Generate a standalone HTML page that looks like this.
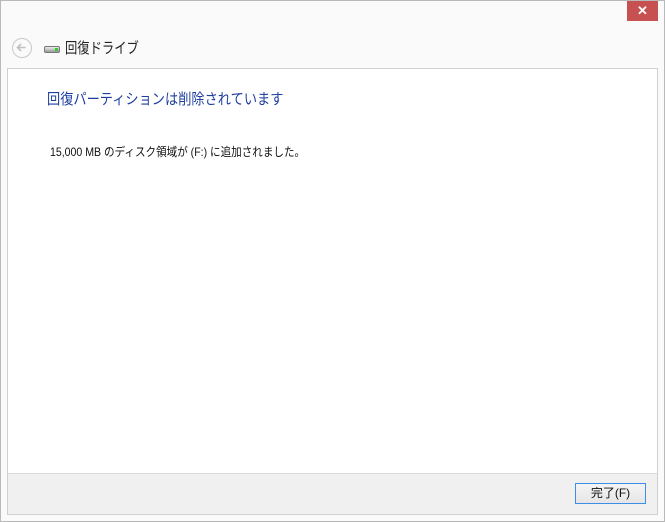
<!DOCTYPE html>
<html><head><meta charset="utf-8"><style>
*{margin:0;padding:0;box-sizing:border-box}
body{width:665px;height:522px;overflow:hidden;background:#fafafa;font-family:"Liberation Sans","Noto Sans CJK JP",sans-serif;position:relative}
.win{position:absolute;left:0;top:0;width:665px;height:522px;border:1px solid #b9b9b9}
.close{position:absolute;left:627px;top:1px;width:31px;height:20px;background:#c75050;color:#fff;font-size:13px;text-align:center;line-height:20px;font-weight:bold}
.back{position:absolute;left:12px;top:38px;width:20px;height:20px;border:1.5px solid #c8c8c8;border-radius:50%}
.drive{position:absolute;left:44px;top:46px;width:16px;height:7px;border:1px solid #777;border-radius:2px;background:linear-gradient(#eee,#999)}
.drive i{position:absolute;right:1px;top:1px;width:3px;height:3px;background:#3c3}
.t1{position:absolute;left:65px;top:37px;font-size:15px;color:#222;transform:scaleX(0.82);transform-origin:left;white-space:nowrap}
.panel{position:absolute;left:7px;top:68px;width:651px;height:447px;border:1px solid #d0d0d0;background:#fff}
.h{position:absolute;left:39px;top:19px;font-size:15px;color:#1e3e9e;transform:scaleX(0.88);transform-origin:left;white-space:nowrap}
.p{position:absolute;left:42px;top:74px;font-size:12px;color:#111;transform:scaleX(0.88);transform-origin:left;white-space:nowrap}
.foot{position:absolute;left:0;top:404px;width:649px;height:41px;background:#f0f0f0;border-top:1px solid #dcdcdc}
.btn{position:absolute;left:567px;top:9px;width:71px;height:21px;border:1px solid #3c8ee8;background:linear-gradient(#f4f4f4,#e6e6e6);font-size:12px;text-align:center;line-height:19px;color:#111}
</style></head><body>
<div class="win"></div>
<div class="close">✕</div>
<div class="back"><svg width="17" height="17" viewBox="0 0 17 17" style="position:absolute;left:0;top:0"><path d="M12.5 8.5H5M8 5L4.5 8.5L8 12" stroke="#c0c0c0" stroke-width="1.6" fill="none"/></svg></div>
<div class="drive"><i></i></div>
<div class="t1">回復ドライブ</div>
<div class="panel">
<div class="h">回復パーティションは削除されています</div>
<div class="p">15,000 MB のディスク領域が (F:) に追加されました。</div>
<div class="foot"><div class="btn">完了(F)</div></div>
</div>
</body></html>
